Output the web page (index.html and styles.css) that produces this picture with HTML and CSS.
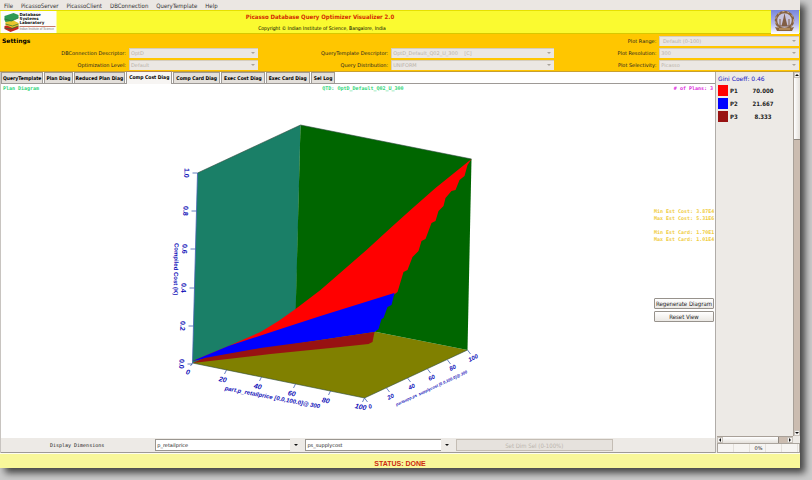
FILE: index.html
```html
<!DOCTYPE html>
<html lang="en">
<head>
    <meta charset="UTF-8">
    <meta name="viewport" content="width=device-width, initial-scale=1.0">
    <title>Picasso Database Query Optimizer Visualizer</title>
    <link rel="stylesheet" href="styles.css">
</head>
<body>
<div class="window">
    <nav class="menubar">
        <a href="#">File</a>
        <a href="#">PicassoServer</a>
        <a href="#">PicassoClient</a>
        <a href="#">DBConnection</a>
        <a href="#">QueryTemplate</a>
        <a href="#">Help</a>
    </nav>

    <header class="banner">
        <svg class="lab-logo" viewBox="0 0 56 22" role="img" aria-label="Database Systems Laboratory">
            <rect width="56" height="22" fill="#fdfdfb"/>
            <path d="M4 15l7-2 7 2v3l-8 3-6-3z" fill="#c62820"/>
            <path d="M5 10l7-1 6 3v3l-6 2-7-3z" fill="#e8c62c"/>
            <path d="M4 5l9-3 5 2v3l-7 3-6 1-1-2z" fill="#2f9a52"/>
            <path d="M4 8l7 2 7-3M5 13l7 2 6-2M4 17l6 1 8-3" fill="none" stroke="#246b36" stroke-width=".7"/>
            <g class="logo-name">
                <text x="19" y="5">Database</text>
                <text x="19" y="9">Systems</text>
                <text x="19" y="13">Laboratory</text>
            </g>
            <path d="M19 15.5h36" stroke="#b85a45" stroke-width=".8"/>
            <text class="logo-sub" x="19" y="19">Indian Institute of Science</text>
        </svg>
        <div class="banner-text">
            <h1>Picasso Database Query Optimizer Visualizer 2.0</h1>
            <p>Copyright © Indian Institute of Science, Bangalore, India</p>
        </div>
        <svg class="iisc-logo" viewBox="0 0 28 24" role="img" aria-label="Indian Institute of Science">
            <defs>
                <linearGradient id="sky" x2="0" y2="1">
                    <stop offset="0" stop-color="#7686dc"/>
                    <stop offset=".55" stop-color="#b3b6ea"/>
                    <stop offset="1" stop-color="#fff"/>
                </linearGradient>
            </defs>
            <rect width="28" height="24" fill="url(#sky)"/>
            <circle cx="13.500" cy="10.500" r="8.500" fill="#c9c4dc" stroke="#876342" stroke-width="2.500"/>
            <circle cx="13.500" cy="10.500" r="9" fill="none" stroke="#d8bb9c" stroke-dasharray="2 3"/>
            <path d="M13.500 3l-1 5-2 8h6l-2-8z" fill="#805d45"/>
            <path d="M9 16V9M18 16V9M7 16h13" stroke="#805d45" fill="none"/>
            <path d="M4 17l4 1h11l4-1-2 4H6z" fill="#8a633c"/>
            <path d="M8 19h11" stroke="#d7ae75"/>
        </svg>
    </header>

    <section class="settings">
        <div class="group connection">
            <h2>Settings</h2>
            <div class="field">
                <label for="dbconn">DBConnection Descriptor:</label>
                <span class="combo"><select id="dbconn" disabled><option>OptD</option></select></span>
            </div>
            <div class="field">
                <label for="optlevel">Optimization Level:</label>
                <span class="combo"><select id="optlevel" disabled><option>Default</option></select></span>
            </div>
        </div>
        <div class="group template">
            <div class="field">
                <label for="template">QueryTemplate Descriptor:</label>
                <span class="combo"><select id="template" disabled><option>OptD_Default_Q02_U_300 &nbsp;&nbsp; [C]</option></select></span>
            </div>
            <div class="field">
                <label for="distribution">Query Distribution:</label>
                <span class="combo"><select id="distribution" disabled><option>UNIFORM</option></select></span>
            </div>
        </div>
        <div class="group plot">
            <div class="field">
                <label for="range">Plot Range:</label>
                <span class="combo"><select id="range" disabled><option>&nbsp;Default (0-100)</option></select></span>
            </div>
            <div class="field">
                <label for="resolution">Plot Resolution:</label>
                <span class="combo"><select id="resolution" disabled><option>300</option></select></span>
            </div>
            <div class="field">
                <label for="selectivity">Plot Selectivity:</label>
                <span class="combo"><select id="selectivity" disabled><option>Picasso</option></select></span>
            </div>
        </div>
    </section>

    <main class="workspace">
        <div class="diagram">
            <div class="tabs" role="tablist">
                <button role="tab">QueryTemplate</button>
                <button role="tab">Plan Diag</button>
                <button role="tab">Reduced Plan Diag</button>
                <button role="tab" class="active" aria-selected="true">Comp Cost Diag</button>
                <button role="tab">Comp Card Diag</button>
                <button role="tab">Exec Cost Diag</button>
                <button role="tab">Exec Card Diag</button>
                <button role="tab">Sel Log</button>
            </div>
            <div class="caption">
                <span>Plan Diagram</span>
                <span class="qtd">QTD: OptD_Default_Q02_U_300</span>
                <span class="plans"># of Plans: 3</span>
            </div>
            <div class="plot-row">
                <svg class="surface" viewBox="1 94 652 344" role="img" aria-label="Compiled cost surface">
                    <!-- walls and floor -->
                    <path d="M192 363L295 316L467 350L364 398z" fill="#808000"/>
                    <path d="M197 173L300 125L295 330L192 363z" fill="#1a7f67"/>
                    <path d="M300 125L471 159L467 350L295 316z" fill="#006600"/>
                    <!-- plans -->
                    <path d="M192 361L228 346L260 332L278 321L295 309L320 290L343 270L366 250L390 228L410 210L435 188L471 159L467 165L464 176L459 180L455 190L451 191L445 198L443 206L438 211L435 221L431 223L425 239L421 241L418 251L412 257L407 270L403 272L397 292L360 320L250 350z" fill="#f00"/>
                    <path d="M192 361L228 346L280 329L320 316L397 292L394 293L391 305L387 307L383 318L381 319L378 329L374 332L320 340L230 354z" fill="#00f"/>
                    <path d="M192 363L204 358L260 348L320 340L374 332L372 342L368 344L340 347L270 354z" fill="#981212"/>
                    <!-- axes -->
                    <path class="edge" d="M300 125L471 159M192 363L364 398L467 350M197 173L300 125"/>
                    <path class="axis" d="M197 173L192 363M197 173h-5M196 211h-5M195 249h-5M194 288h-5M193 326h-5M192 364h-5M192 363l-2 3M226 370l-2 4M261 377l-2 4M295 384l-2 4M330 391l-2 4M364 398l-2 4M364 398l3 4M386 388l3 4M407 378l3 4M427 369l3 4M447 360l3 4M467 350l3 4"/>
                    <g class="ticks">
                        <text transform="translate(184 168) rotate(92)">1.0</text>
                        <text transform="translate(183 206) rotate(92)">0.8</text>
                        <text transform="translate(182 244) rotate(92)">0.6</text>
                        <text transform="translate(181 283) rotate(92)">0.4</text>
                        <text transform="translate(180 321) rotate(92)">0.2</text>
                        <text transform="translate(179 359) rotate(92)">0.0</text>
                        <text class="title" transform="translate(174 243) rotate(91)">Compiled Cost (K)</text>
                    </g>
                    <g class="ticks slanted">
                        <text transform="translate(185 374) rotate(12)">0</text>
                        <text transform="translate(218 381) rotate(12)">20</text>
                        <text transform="translate(253 388) rotate(12)">40</text>
                        <text transform="translate(287 395) rotate(12)">60</text>
                        <text transform="translate(321 402) rotate(12)">80</text>
                        <text transform="translate(354 408) rotate(12)">100</text>
                        <text class="title" transform="translate(224 390) rotate(11)">part.p_retailprice [0.0,100.0]@ 300</text>
                    </g>
                    <g class="ticks depth">
                        <text transform="translate(369 409) rotate(-26)">0</text>
                        <text transform="translate(388 400) rotate(-26)">20</text>
                        <text transform="translate(409 390) rotate(-26)">40</text>
                        <text transform="translate(429 381) rotate(-26)">60</text>
                        <text transform="translate(450 371) rotate(-26)">80</text>
                        <text transform="translate(469 362) rotate(-26)">100</text>
                        <text class="title" transform="translate(396 406) rotate(-25)">partsupp.ps_supplycost [0.0,100.0]@ 300</text>
                    </g>
                </svg>
                <aside class="side-tools">
                    <div class="estimates">
                        <p>Min Est Cost: 3.87E4<br>Max Est Cost: 5.31E6</p>
                        <p>Min Est Card: 1.70E1<br>Max Est Card: 1.01E4</p>
                    </div>
                    <button>Regenerate Diagram</button>
                    <button>Reset View</button>
                </aside>
            </div>
            <div class="dimensions">
                <span class="dim-title">Display Dimensions</span>
                <span class="combo"><select aria-label="First dimension"><option>p_retailprice</option></select></span>
                <span class="combo"><select aria-label="Second dimension"><option>ps_supplycost</option></select></span>
                <button disabled>Set Dim Sel (0-100%)</button>
            </div>
        </div>

        <aside class="legend">
            <div class="legend-body">
                <div class="legend-list">
                    <h3>Gini Coeff: 0.46</h3>
                    <table>
                        <tr><td><i class="swatch red"></i></td><th>P1</th><td>70.000</td></tr>
                        <tr><td><i class="swatch blue"></i></td><th>P2</th><td>21.667</td></tr>
                        <tr><td><i class="swatch brown"></i></td><th>P3</th><td>8.333</td></tr>
                    </table>
                </div>
                <div class="vscroll">
                    <i class="step up"></i>
                    <i class="thumb"></i>
                    <i class="step down"></i>
                </div>
            </div>
            <div class="hscroll">
                <i class="step left"></i>
                <i class="thumb"></i>
                <i class="step right"></i>
            </div>
            <div class="progress" role="progressbar" aria-valuenow="0">0%</div>
        </aside>
    </main>

    <footer class="status">STATUS: DONE</footer>
</div>
</body>
</html>
```
FILE: styles.css
```css
* {
    box-sizing: border-box;
}
body {
    margin: 0;
    min-height: 100vh;
    display: flex;
    padding: 0 12px 12px 0;
    background: #cbcbcb;
    font-family: "DejaVu Sans", sans-serif;
    font-size: 5px;
    line-height: 7px;
    color: #222;
    overflow: hidden;
}
h1, h2, h3, p {
    margin: 0;
}
button, select {
    font: inherit;
    color: inherit;
    margin: 0;
}
.window {
    flex: 1;
    display: flex;
    flex-direction: column;
    box-shadow: 5px 5px 7px #444;
    background: #edeae6;
}

/* menu */
.menubar {
    display: flex;
    gap: 8px;
    height: 10px;
    padding: 2px 4px 0;
    background: #ebe7e3;
    font-family: "DejaVu Sans Condensed", "DejaVu Sans", sans-serif;
    font-size: 6px;
}
.menubar a {
    color: #333;
    text-decoration: none;
}

/* banner */
.banner {
    display: flex;
    justify-content: space-between;
    height: 24px;
    background: #fafa30;
    border-top: 1px solid #e6e000;
    border-bottom: 1px solid #d8c800;
}
.lab-logo {
    width: 57px;
    height: 22px;
}
.iisc-logo {
    width: 28px;
    height: 24px;
    margin-right: 1px;
    margin-top: -1px;
}
.logo-name {
    font-size: 4px;
    font-weight: bold;
    fill: #111;
}
.logo-sub {
    font-family: "Liberation Sans", sans-serif;
    font-size: 3px;
    fill: #777;
}
.banner-text {
    flex: 1;
    padding-top: 2px;
    padding-right: 188px;
    text-align: center;
    font-family: "DejaVu Sans Condensed", "DejaVu Sans", sans-serif;
}
.banner-text h1 {
    font-size: 6px;
    line-height: 8px;
    color: #d42a00;
    padding-bottom: 4px;
}
.banner-text p {
    padding-left: 4px;
    color: #000;
}

/* settings */
.settings {
    display: grid;
    grid-template-columns: 258fr 296fr 245fr;
    height: 38px;
    padding: 2px 1px 0 0;
    background: #ffc600;
    border-bottom: 1px solid #c9a030;
}
.settings h2 {
    padding-left: 2px;
    font-size: 6px;
    line-height: 10px;
    color: #000;
}
.group {
    display: flex;
    flex-direction: column;
    justify-content: flex-end;
    gap: 2px;
    padding-bottom: 1px;
}
.field {
    display: flex;
    align-items: center;
    justify-content: flex-end;
    gap: 3px;
}
.connection .combo {
    width: 50%;
}
.template .combo {
    width: 55%;
}
.plot .combo {
    width: 57%;
}
.combo {
    position: relative;
    display: block;
    height: 10px;
}
.combo select {
    display: block;
    width: 100%;
    height: 100%;
    padding: 0 12px 0 1px;
    border: 0;
    border-radius: 0;
    appearance: none;
    background: #ebe7e3;
}
.combo select:disabled {
    color: #b9b2a9;
    opacity: 1;
    border-top: 1px solid #d6cdbd;
    border-left: 1px solid #d6cdbd;
}
.combo::after {
    content: "";
    position: absolute;
    right: 3px;
    top: 4px;
    border: 2px solid transparent;
    border-top-color: #aaa39a;
    border-bottom: 0;
    pointer-events: none;
}

/* workspace */
.workspace {
    flex: 1;
    display: flex;
}
.diagram {
    flex: 1;
    display: flex;
    flex-direction: column;
    border-left: 1px solid #c8c4c0;
    border-right: 1px solid #b0aca8;
    background: #fff;
}
.tabs {
    display: flex;
    align-items: flex-end;
    gap: 1px;
    height: 12px;
    border-bottom: 1px solid #9e9a96;
}
.tabs button {
    height: 11px;
    padding: 0 2px;
    border: 1px solid #9e9a96;
    border-bottom: 0;
    background: #e3dfda;
    font-family: "DejaVu Sans Condensed", "DejaVu Sans", sans-serif;
    font-weight: bold;
    white-space: nowrap;
    color: #000;
}
.tabs button:nth-child(-n+3) {
    padding: 0 1px;
}
.tabs .active {
    height: 13px;
    padding: 0 2px 1px;
    margin-bottom: -1px;
    border-top-color: #b88850;
    background: #f7f5f3;
}
.caption {
    display: grid;
    grid-template-columns: 1fr 1fr 1fr;
    height: 10px;
    padding: 1px 2px 0;
    font-family: "DejaVu Sans Mono", monospace;
    font-weight: bold;
    color: #2fd678;
}
.caption .qtd {
    padding-left: 10px;
    text-align: center;
}
.caption .plans {
    text-align: right;
    color: #dc2bdc;
}
.plot-row {
    flex: 1;
    display: flex;
    justify-content: space-between;
}
.surface {
    flex: 1;
    min-width: 0;
    height: 344px;
}
.edge {
    fill: none;
    stroke: #2b4a3c;
    stroke-width: .6;
}
.axis {
    fill: none;
    stroke: #4060b0;
    stroke-width: .8;
}
.ticks {
    font-family: "Liberation Sans", sans-serif;
    font-size: 7px;
    font-weight: bold;
    fill: #1010b8;
}
.ticks .title {
    font-size: 6px;
}
.slanted, .depth {
    font-style: italic;
}
.depth {
    font-size: 6px;
}
.depth .title {
    font-size: 4px;
}
.side-tools {
    width: 61px;
    padding: 114px 1px 0 0;
    display: flex;
    flex-direction: column;
    gap: 2px;
}
.estimates {
    height: 88px;
    font-family: "DejaVu Sans Mono", monospace;
    font-weight: bold;
    color: #f0cc40;
    white-space: nowrap;
}
.estimates p {
    padding-bottom: 7px;
}
.side-tools button {
    height: 11px;
    padding: 0;
    border: 1px solid #97928c;
    border-radius: 1px;
    background: linear-gradient(#fff, #ebe8e4);
    font-family: "DejaVu Sans Condensed", "DejaVu Sans", sans-serif;
    font-size: 6px;
    white-space: nowrap;
}
.dimensions {
    display: grid;
    grid-template-columns: 152fr 148fr 148fr 157fr 100fr;
    gap: 2px;
    align-items: center;
    height: 15px;
    background: #edeae6;
    border-bottom: 1px solid #9e9a96;
}
.dim-title {
    text-align: center;
    font-family: "DejaVu Sans Mono", monospace;
}
.dimensions .combo {
    height: 12px;
    padding-right: 13px;
}
.dimensions select {
    padding: 0 0 0 1px;
    border: 1px solid #9a9690;
    border-right: 0;
    background: #fff;
}
.dimensions .combo::after {
    right: 5px;
    top: 5px;
    border-top-color: #111;
}
.dimensions button {
    height: 12px;
    padding: 0;
    border: 1px solid #c4bdb4;
    background: #e6e2dd;
    color: #bbb5ad;
    font-family: "DejaVu Sans Condensed", "DejaVu Sans", sans-serif;
    font-size: 6px;
}

/* legend */
.legend {
    width: 84px;
    padding-left: 1px;
    display: flex;
    flex-direction: column;
}
.legend-body {
    flex: 1;
    display: flex;
}
.legend-list {
    flex: 1;
    padding: 3px 0 0 1px;
}
.legend h3 {
    font-size: 6px;
    font-weight: normal;
    line-height: 8px;
    padding-bottom: 1px;
    color: #1414c0;
}
.legend table {
    border-collapse: collapse;
    font-family: "DejaVu Sans Condensed", "DejaVu Sans", sans-serif;
    font-size: 6px;
    font-weight: bold;
    line-height: 10px;
}
.legend td, .legend th {
    padding: 1px 0;
}
.legend th {
    width: 20px;
    padding-left: 2px;
    text-align: left;
}
.legend td:last-child {
    width: 30px;
    text-align: center;
}
.swatch {
    display: block;
    width: 10px;
    height: 11px;
}
.red {
    background: #f00;
}
.blue {
    background: #00f;
}
.brown {
    background: #981212;
}
.vscroll {
    display: flex;
    flex-direction: column;
    width: 7px;
    background: #cbbcb0;
    border-left: 1px solid #a8a098;
}
.vscroll .thumb {
    height: 62px;
    border-bottom: 1px solid #8f8880;
    background: linear-gradient(90deg, #fff, #e3dfda);
}
.step {
    display: flex;
    align-items: center;
    justify-content: center;
    width: 6px;
    height: 6px;
    background: #f4f2f0;
    border: 1px solid #c8c2bb;
}
.step::after {
    content: "";
    border: 2px solid transparent;
    border-top: 0;
    border-bottom-color: #111;
}
.down {
    margin-top: auto;
}
.down::after {
    transform: rotate(180deg);
}
.left::after {
    transform: rotate(-90deg);
}
.right::after {
    transform: rotate(90deg);
}
.hscroll {
    display: flex;
    height: 7px;
    margin-right: 7px;
    background: #cbbcb0;
    border-top: 1px solid #a8a098;
}
.hscroll .thumb {
    width: 56px;
    border-right: 1px solid #8f8880;
    background: linear-gradient(#fff, #e3dfda);
}
.right {
    margin-left: auto;
}
.progress {
    height: 10px;
    border: 1px solid #aaa49d;
    background: repeating-linear-gradient(90deg, #f6f4f2 0 15px, #e4e0db 15px 16px);
    line-height: 8px;
    text-align: center;
}

/* status */
.status {
    height: 15px;
    padding-top: 6px;
    background: #f8f79a;
    border-top: 1px solid #fdfdf0;
    font-family: "Liberation Sans", sans-serif;
    font-size: 7px;
    font-weight: bold;
    text-align: center;
    color: #cc2a10;
}
```
